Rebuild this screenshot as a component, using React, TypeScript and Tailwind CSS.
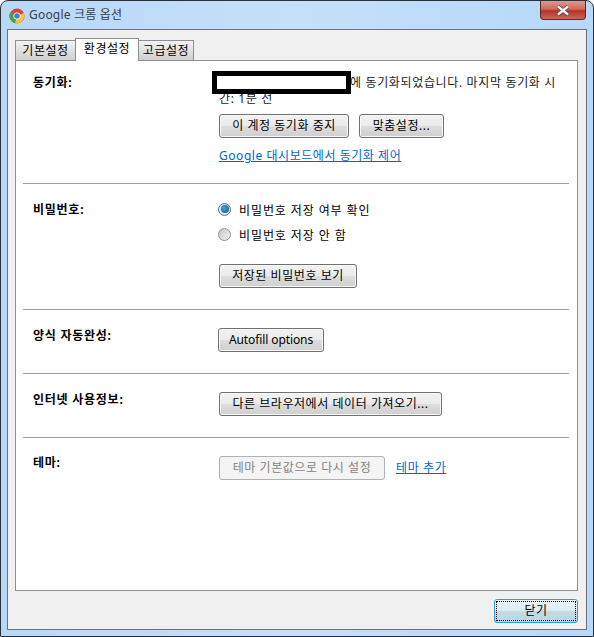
const FONT = "font-['Noto_Sans','Noto_Sans_CJK_KR',sans-serif]";

function Btn({ children, w, disabled, latin }: { children: string; w: string; disabled?: boolean; latin?: boolean }) {
  return (
    <button
      className={`${w} block h-6 shrink-0 rounded-[3px] border text-center text-[12px] leading-[20px] ${latin ? "tracking-[-0.1px]" : "tracking-[0.55px]"} ${
        disabled
          ? "border-[#adb2b5] bg-[#f4f4f4] text-[#838383]"
          : "border-[#707070] bg-[linear-gradient(#f2f2f2_0%,#ebebeb_48%,#dddddd_52%,#cfcfcf_100%)] text-black shadow-[inset_0_0_0_1px_#f8f8f8]"
      }`}
    >
      {children}
    </button>
  );
}

function Radio({ on, label }: { on?: boolean; label: string }) {
  return (
    <div className="flex h-[14px] items-center gap-[8px]">
      <span
        className={`ml-[-1px] flex size-[13px] items-center justify-center rounded-full border ${
          on ? "border-[#5a6f7f] bg-[#dfe6ea]" : "border-[#8e8f8f] bg-[linear-gradient(135deg,#c4c4c4,#f6f6f6)]"
        }`}
      >
        {on && <span className="size-[8px] rounded-full bg-[radial-gradient(circle_at_40%_40%,#3fa6e0,#0b4f86)]" />}
      </span>
      <span className="pt-[3px] text-[12px] tracking-[0.9px] text-black">{label}</span>
    </div>
  );
}

function Section({ label, children, h, labelTop }: { label: string; children: React.ReactNode; h: string; labelTop: string }) {
  return (
    <div className={`ml-[7px] mr-2 flex ${h} border-b border-[#a0a0a0] pl-[10px]`}>
      <div className={`w-[186px] shrink-0 ${labelTop} text-[12px] font-bold leading-[16px] tracking-[0.75px] text-black`}>{label}</div>
      <div className="min-w-0 flex-1">{children}</div>
    </div>
  );
}

export default function App() {
  return (
    <div className={`${FONT} flex h-[637px] w-[594px] flex-col overflow-hidden rounded-t-[8px] border border-[#2a3138] bg-[linear-gradient(90deg,#b8d8f8_0%,#c5e0fa_50%,#b6d8fa_100%)] pb-[6px] pl-[6px] pr-[6px]`}>
      {/* title bar */}
      <div className="flex h-[28px] shrink-0 items-center">
        <svg width="16" height="16" viewBox="0 0 16 16" className="ml-[2px] mt-[1px]">
          <circle cx="8" cy="8" r="7.5" fill="#d9443a" />
          <path d="M8 8 L1.5 4 A7.5 7.5 0 0 0 6 15.2 Z" fill="#4c9f48" />
          <path d="M8 8 L14.8 5 A7.5 7.5 0 0 1 6 15.2 Z" fill="#f2c530" />
          <circle cx="8" cy="8" r="3.6" fill="#fff" />
          <circle cx="8" cy="8" r="2.8" fill="#3b82d6" />
        </svg>
        <span className="ml-[4px] text-[12px] tracking-[0.2px] text-[#3a3f44]">Google 크롬 옵션</span>
        <div className="ml-auto mr-[1px] flex h-[19px] w-[46px] self-start items-center justify-center rounded-b-[4px] border border-t-0 border-[#5c2a24] bg-[linear-gradient(#dd9a90_0%,#cf6a5c_45%,#b93222_55%,#c8675a_100%)]">
          <svg width="14" height="11" viewBox="0 0 14 11">
            <path d="M2 1.5 L12 9.5 M12 1.5 L2 9.5" stroke="#3d4650" strokeWidth="4" />
            <path d="M2 1.5 L12 9.5 M12 1.5 L2 9.5" stroke="#f2f2f2" strokeWidth="2.4" />
          </svg>
        </div>
      </div>

      {/* client */}
      <div className="flex min-h-0 flex-1 flex-col border border-[#6f7378] bg-[#f0f0f0] pl-[7px] pr-[8px] pt-[7px]">
        {/* tabs */}
        <div className="relative z-10 flex h-[23px] shrink-0 items-end text-[12px] tracking-[0.55px] text-black">
          <div className="flex h-5 w-[61px] items-center justify-center border border-b-0 border-[#8e8f94] bg-[linear-gradient(#f2f2f2,#cfcfcf)]">기본설정</div>
          <div className="mb-[-1px] ml-[-1px] flex h-[23px] w-[64px] items-center justify-center border border-b-0 border-[#8e8f94] bg-white pb-[2px]">환경설정</div>
          <div className="ml-[-1px] flex h-5 w-[56px] items-center justify-center border border-b-0 border-[#8e8f94] bg-[linear-gradient(#f2f2f2,#cfcfcf)]">고급설정</div>
        </div>

        {/* panel */}
        <div className="h-[531px] shrink-0 border border-[#8e8f94] bg-white">
          <Section label="동기화:" h="h-[123px]" labelTop="pt-[14px]">
            <div className="relative pt-[14px]">
              <p className="w-[345px] text-[12px] leading-[16px] tracking-[0.65px] text-[#1a1a1a]">
                <span className="inline-block w-[131px]" />에 동기화되었습니다. 마지막 동기화 시간: 1분 전
              </p>
              <div className="absolute left-[-7px] top-[10px] h-[23px] w-[139px] border-[5px] border-black bg-white" />
              <div className="mt-[7px] flex gap-[10px]">
                <Btn w="w-[130px]">이 계정 동기화 중지</Btn>
                <Btn w="w-[85px]">맞춤설정...</Btn>
              </div>
              <a className="mt-[10px] block text-[12px] leading-[16px] tracking-[0.55px] text-[#0066cc] underline">Google 대시보드에서 동기화 제어</a>
            </div>
          </Section>
          <Section label="비밀번호:" h="h-[126px]" labelTop="pt-[18px]">
            <div className="flex flex-col pt-[18px]">
              <Radio on label="비밀번호 저장 여부 확인" />
              <div className="mt-[11px]">
                <Radio label="비밀번호 저장 안 함" />
              </div>
              <div className="mt-[23px]">
                <Btn w="w-[138px]">저장된 비밀번호 보기</Btn>
              </div>
            </div>
          </Section>
          <Section label="양식 자동완성:" h="h-[64px]" labelTop="pt-[18px]">
            <div className="pt-[18px]">
              <Btn latin w="w-[106px] ml-[-1px]">Autofill options</Btn>
            </div>
          </Section>
          <Section label="인터넷 사용정보:" h="h-[64px]" labelTop="pt-[18px]">
            <div className="pt-[18px]">
              <Btn w="w-[223px]">다른 브라우저에서 데이터 가져오기...</Btn>
            </div>
          </Section>
          <div className="ml-[7px] mr-2 flex pl-[10px]">
            <div className="w-[186px] shrink-0 pt-[17px] text-[12px] font-bold leading-[16px] tracking-[0.75px] text-black">테마:</div>
            <div className="flex items-center pt-[18px]">
              <Btn w="w-[166px]" disabled>테마 기본값으로 다시 설정</Btn>
              <a className="ml-[11px] text-[12px] tracking-[0.6px] text-[#0066cc] underline">테마 추가</a>
            </div>
          </div>
        </div>

        {/* footer */}
        <div className="flex flex-1 items-start justify-end pt-[8px]">
          <button className="h-6 w-[84px] rounded-[3px] border border-[#2f9fd6] bg-[linear-gradient(#eaf4f8_0%,#dcebf2_48%,#c4dbe6_52%,#bcd5e1_100%)] p-[1px] text-[12px] tracking-[0.55px] text-black">
            <span className="flex h-full items-center justify-center border border-dotted border-black">닫기</span>
          </button>
        </div>
      </div>
    </div>
  );
}
